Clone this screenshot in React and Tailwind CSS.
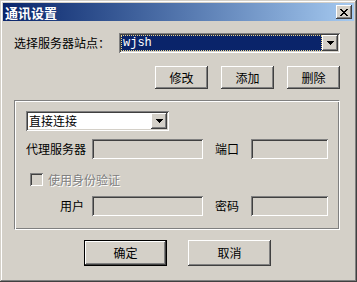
import React from "react";

const raised =
  "bg-[#d4d0c8] shadow-[inset_-1px_-1px_#404040,inset_1px_1px_#ffffff,inset_-2px_-2px_#808080,inset_2px_2px_#d4d0c8]";
const sunken =
  "shadow-[inset_1px_1px_#808080,inset_-1px_-1px_#ffffff,inset_2px_2px_#404040,inset_-2px_-2px_#d4d0c8]";

function Arrow() {
  return (
    <svg width="7" height="4" viewBox="0 0 7 4" className="block">
      <path d="M0 0h7v1H0zM1 1h5v1H1zM2 2h3v1H2zM3 3h1v1H3z" fill="#000" />
    </svg>
  );
}

function DropBtn() {
  return (
    <div className={`w-[16px] h-[16px] flex items-center justify-center ${raised}`}>
      <Arrow />
    </div>
  );
}

function Btn({ children, className = "" }) {
  return (
    <div className={`flex items-center justify-center ${raised} ${className}`}>
      <span className="leading-none">{children}</span>
    </div>
  );
}

function Field({ className = "" }) {
  return <div className={`h-[20px] bg-[#d4d0c8] ${sunken} ${className}`} />;
}

export default function App() {
  return (
    <div
      className="w-[357px] h-[282px] bg-[#d4d0c8] p-[3px] flex flex-col text-[12px] text-black shadow-[inset_-1px_-1px_#404040,inset_1px_1px_#d4d0c8,inset_-2px_-2px_#808080,inset_2px_2px_#ffffff]"
      style={{ fontFamily: '"Noto Sans CJK SC", "Liberation Sans", sans-serif' }}
    >
      {/* Title bar */}
      <div className="h-[18px] flex items-center bg-gradient-to-r from-[#0a246a] to-[#a6caf0] pl-[2px] pr-[2px]">
        <span className="text-white font-bold text-[13px] leading-none">通讯设置</span>
        <div className={`ml-auto w-[16px] h-[14px] flex items-center justify-center ${raised}`}>
          <svg width="8" height="7" viewBox="0 0 8 7" className="block">
            <path
              d="M0 0h2v1H0zM6 0h2v1H6zM1 1h2v1H1zM5 1h2v1H5zM2 2h4v1H2zM3 3h2v1H3zM2 4h4v1H2zM1 5h2v1H1zM5 5h2v1H5zM0 6h2v1H0zM6 6h2v1H6z"
              fill="#000"
            />
          </svg>
        </div>
      </div>

      <div className="flex flex-col pl-[11px] pr-[14px]">
        {/* Row 1 */}
        <div className="mt-[12px] h-[20px] flex items-center">
          <span className="leading-none">选择服务器站点：</span>
          <div className={`ml-auto w-[221px] h-[20px] bg-white p-[2px] flex ${sunken}`}>
            <div className="flex-1 bg-[#0a246a] border border-dotted border-[#e8d48a] flex items-center pl-[1px]">
              <span
                className="text-white leading-none text-[12px]"
                style={{ fontFamily: '"Liberation Mono", monospace' }}
              >
                wjsh
              </span>
            </div>
            <DropBtn />
          </div>
        </div>

        {/* Row 2 */}
        <div className="mt-[13px] flex justify-end gap-[13px]">
          <Btn className="w-[53px] h-[23px]">修改</Btn>
          <Btn className="w-[53px] h-[23px]">添加</Btn>
          <Btn className="w-[53px] h-[23px]">删除</Btn>
        </div>

        {/* Group box */}
        <div className="mt-[11px] w-[326px] h-[130px] border border-t-[#808080] border-l-[#808080] border-b-white border-r-white shadow-[inset_1px_1px_#ffffff,inset_-1px_-1px_#808080] pl-[11px] pt-[10px] flex flex-col">
          <div className={`w-[143px] h-[20px] bg-white p-[2px] flex ${sunken}`}>
            <div className="flex-1 flex items-center pl-[1px]">
              <span className="leading-none">直接连接</span>
            </div>
            <DropBtn />
          </div>

          <div className="mt-[8px] h-[20px] flex items-center">
            <span className="w-[66px] leading-none">代理服务器</span>
            <Field className="w-[111px]" />
            <span className="ml-[12px] w-[36px] leading-none">端口</span>
            <Field className="w-[77px]" />
          </div>

          <div className="mt-[14px] h-[13px] flex items-center">
            <div className={`ml-[4px] w-[13px] h-[13px] bg-[#d4d0c8] ${sunken}`} />
            <span className="ml-[5px] leading-none text-[#808080] [text-shadow:1px_1px_0_#ffffff]">
              使用身份验证
            </span>
          </div>

          <div className="mt-[10px] h-[20px] flex items-center">
            <span className="w-[66px] pr-[8px] text-right leading-none">用户</span>
            <Field className="w-[111px]" />
            <span className="ml-[12px] w-[36px] leading-none">密码</span>
            <Field className="w-[77px]" />
          </div>
        </div>

        {/* Bottom buttons */}
        <div className="mt-[10px] flex justify-center gap-[21px] pl-[1px]">
          <div className="w-[83px] h-[26px] border border-black">
            <Btn className="w-full h-full">确定</Btn>
          </div>
          <Btn className="w-[83px] h-[26px]">取消</Btn>
        </div>
      </div>
    </div>
  );
}
